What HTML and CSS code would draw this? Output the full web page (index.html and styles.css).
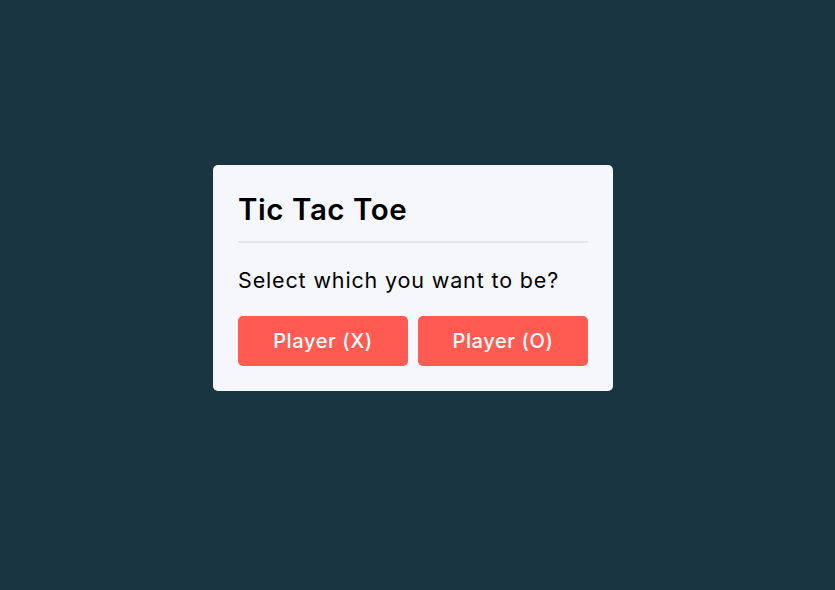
FILE: index.html
```html
<!DOCTYPE html>
<html>
<head>
<meta charset="utf-8">
<link rel="stylesheet" href="styles.css">
</head>
<body>
<div class="stage">
  <div class="select-box">
    <header class="title">Tic Tac Toe</header>
    <div class="content">
      <div class="question">Select which you want to be?</div>
      <div class="options">
        <button class="btn">Player (X)</button>
        <button class="btn">Player (O)</button>
      </div>
    </div>
  </div>
</div>
</body>
</html>
```
FILE: styles.css
```css
* { box-sizing: border-box; margin: 0; padding: 0; }
html, body { height: 100%; }
body {
  background: #1a3542;
  font-family: "Inter", "Open Sans", sans-serif;
}
.stage {
  height: 100%;
  display: flex;
  align-items: center;
  justify-content: center;
  padding: 0 9px 35px 0;
}
.select-box {
  width: 400px;
  background: #f6f7fd;
  border-radius: 5px;
  padding: 21px 25px 25px;
}
.title {
  font-size: 29.5px;
  font-weight: 600;
  color: #000;
  line-height: 46px;
  padding-bottom: 9px;
  border-bottom: 2px solid #e3e4ea;
  letter-spacing: 0.55px;
}
.question {
  font-size: 21.5px;
  font-weight: 400;
  color: #000;
  margin-top: 23px;
  line-height: 28px;
  letter-spacing: 0.85px;
}
.options {
  display: flex;
  gap: 10px;
  margin-top: 22px;
}
.btn {
  flex: 1;
  height: 50px;
  border: none;
  border-radius: 5px;
  background: #ff5b52;
  color: #fff;
  font-family: inherit;
  font-size: 20px;
  font-weight: 500;
  letter-spacing: 0.6px;
}
```
